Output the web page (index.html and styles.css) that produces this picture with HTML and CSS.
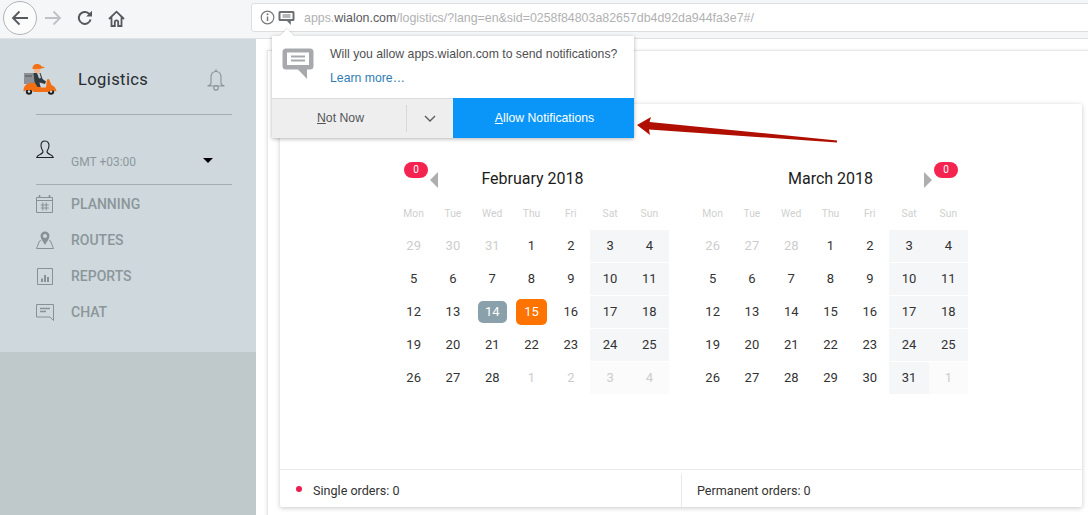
FILE: index.html
```html
<!DOCTYPE html>
<html lang="en">

<head>
    <meta charset="UTF-8">
    <title>Logistics</title>
    <link rel="stylesheet" href="styles.css">
</head>

<body>
    <div class="toolbar">
        <div class="nav-buttons">
            <div class="back-btn">
                <svg width="20" height="18" viewBox="0 0 20 18"><path d="M18 9H3M9.500 2.500 3 9l6.500 6.500" fill="none" stroke="#55585c" stroke-width="1.800"/></svg>
            </div>
            <svg class="fwd-icon" width="18" height="16" viewBox="0 0 18 16"><path d="M1 8h15M9.500 1.500 16 8l-6.500 6.500" fill="none" stroke="#bfc1c4" stroke-width="1.800"/></svg>
            <svg class="reload-icon" width="16" height="16" viewBox="0 0 16 16"><path d="M13.600 9.500A6 6 0 1 1 11.800 3.400L13.500 5" fill="none" stroke="#55585c" stroke-width="2"/><path d="M15 .8V6.600H9.200z" fill="#55585c"/></svg>
            <svg class="home-icon" width="17" height="17" viewBox="0 0 17 17"><path d="M1 9 8.500 1.700 16 9M3.500 7.500V16h3.300v-4a1.700 1.700 0 0 1 3.400 0v4h3.300V7.500" fill="none" stroke="#55585c" stroke-width="1.800"/></svg>
        </div>
        <div class="urlbar">
            <svg class="info-icon" width="15" height="15" viewBox="0 0 15 15"><circle cx="7.500" cy="7.500" r="6.300" fill="none" stroke="#77797c" stroke-width="1.200"/><path d="M7.500 6.500v4.600" stroke="#77797c" stroke-width="1.500"/><circle cx="7.500" cy="4.300" r="1" fill="#77797c"/></svg>
            <svg class="msg-icon" width="17" height="16" viewBox="0 0 17 16"><path d="M2 1h13a1.500 1.500 0 0 1 1.500 1.500v7A1.500 1.500 0 0 1 15 11h-2.200v4L9 11H2A1.500 1.500 0 0 1 .5 9.500v-7A1.500 1.500 0 0 1 2 1z" fill="#6d6f73"/><path d="M2.500 3h12v6h-12z" fill="#fff"/><path d="M4.500 5h8M4.500 7h8" stroke="#6d6f73" stroke-width="1.200"/></svg>
            <span class="url-text">apps.<b>wialon.com</b>/logistics/?lang=en&amp;sid=0258f84803a82657db4d92da944fa3e7#/</span>
        </div>
    </div>

    <div class="app">
        <div class="sidebar">
            <div class="sidebar-top">
                <div class="brand">
                    <svg class="logo" width="34" height="32" viewBox="0 0 34 32">
                        <rect x="1" y="10" width="11" height="11" fill="#8d9195"/>
                        <rect x="2" y="12" width="7" height="2" fill="#6f7377"/>
                        <circle cx="6" cy="28.500" r="3.200" fill="#222"/><circle cx="6" cy="28.500" r="1.200" fill="#ddd"/>
                        <circle cx="28" cy="28.500" r="3.200" fill="#222"/><circle cx="28" cy="28.500" r="1.200" fill="#ddd"/>
                        <path d="M.5 28C.5 23 3.500 20 8 20h7l3 4.500h5l1-8 2-.5 2.500 6c2.500 1 4.500 3 5 6.500-3-1.500-6-1.500-8 .5H11c-2-2.500-7-2.500-10.500-.5z" fill="#f36f14"/>
                        <path d="M10.500 10h7l2 6 3.500 2.500-1 2.500-5.500-1.500 1 4.500h-3l-3-5z" fill="#2f3b40"/>
                        <path d="M14 10h2.500l1.500 5-2 .5z" fill="#c7ccd0"/>
                        <circle cx="14" cy="7" r="3.200" fill="#efb48c"/>
                        <path d="M9.500 6c0-3.500 2-5 4.500-5s4 1 4.500 2.500l3.500.5c-1 1.200-3.500 1.800-6 1.800z" fill="#f36f14"/>
                    </svg>
                    <span class="brand-name">Logistics</span>
                    <svg class="bell" width="18" height="22" viewBox="0 0 18 22"><path d="M9 2.500c-3.500 0-5 2.500-5 6v5.500c0 1.500-1.500 2.500-3.500 3h17c-2-.5-3.500-1.500-3.500-3V8.500c0-3.500-1.500-6-5-6z" fill="none" stroke="#8a9499" stroke-width="1.100"/><path d="M9 .5v2" stroke="#8a9499" stroke-width="1.500"/><circle cx="9" cy="18.800" r="2.300" fill="none" stroke="#8a9499" stroke-width="1.100"/></svg>
                </div>
                <div class="user-row">
                    <svg class="user-icon" width="18" height="19" viewBox="0 0 18 19"><path d="M9 1C6.300 1 5 3 5 5.500S6.500 10.500 7 11.500c.2 1.200-1 2-3 3-2 .8-3 1.500-3.300 3h16.600c-.3-1.500-1.300-2.200-3.300-3-2-1-3.200-1.800-3-3 .5-1 2-3.500 2-6S11.700 1 9 1z" fill="none" stroke="#1d2326" stroke-width="1.100"/></svg>
                    <span class="timezone">GMT +03:00</span>
                    <span class="caret"></span>
                </div>
                <ul class="menu">
                    <li>
                        <svg width="18" height="18" viewBox="0 0 18 18"><path d="M.5 2.500h16v15H.5zM.5 5.500h16" fill="none" stroke="#879196" stroke-width="1"/><path d="M3.500 0v3M13.500 0v3" stroke="#879196" stroke-width="1.600"/><path d="M6.800 7.500v8M10.200 7.500v8M4.800 10h8M4.800 13h8" fill="none" stroke="#879196" stroke-width="1"/></svg>
                        PLANNING
                    </li>
                    <li>
                        <svg width="18" height="18" viewBox="0 0 18 18"><path d="M5 9.500 3.500 10 .5 17.500h17L14.500 10 13 9.500" fill="none" stroke="#879196" stroke-width="1"/><path d="M9 .5a4.500 4.500 0 0 0-4.500 4.500C4.500 8 7.500 11 9 14c1.500-3 4.500-6 4.500-9A4.500 4.500 0 0 0 9 .5z" fill="#879196"/><circle cx="9" cy="5" r="2" fill="#cfd8dc"/></svg>
                        ROUTES
                    </li>
                    <li>
                        <svg width="18" height="18" viewBox="0 0 18 18"><path d="M1.500 1.500h15v16h-15z" fill="none" stroke="#879196" stroke-width="1"/><path d="M5 11.500h2V15H5zM8 8h2v7H8zM11 10h2v5h-2z" fill="#879196"/></svg>
                        REPORTS
                    </li>
                    <li>
                        <svg width="18" height="18" viewBox="0 0 18 18"><path d="M.5 1.500h17v16l-3.500-3.500H.5z" fill="none" stroke="#879196" stroke-width="1"/><path d="M4 5.500h10M4 8.500h6" stroke="#879196" stroke-width="1.500"/></svg>
                        CHAT
                    </li>
                </ul>
            </div>
        </div>

        <div class="content">
            <div class="panel">
                <div class="card">
                    <div class="calendars">
                        <div class="month">
                            <div class="month-head">
                                <span class="badge badge-left">0</span>
                                <span class="prev-arrow"></span>
                                <span class="month-title month-title-first">February 2018</span>
                            </div>
                            <div class="week-names">
                                <span>Mon</span><span>Tue</span><span>Wed</span><span>Thu</span><span>Fri</span><span>Sat</span><span>Sun</span>
                            </div>
                            <div class="days">
                                <span class="out">29</span><span class="out">30</span><span class="out">31</span><span>1</span><span>2</span><span class="we">3</span><span class="we">4</span>
                                <span>5</span><span>6</span><span>7</span><span>8</span><span>9</span><span class="we">10</span><span class="we">11</span>
                                <span>12</span><span>13</span><span><i class="picked">14</i></span><span><i class="today">15</i></span><span>16</span><span class="we">17</span><span class="we">18</span>
                                <span>19</span><span>20</span><span>21</span><span>22</span><span>23</span><span class="we">24</span><span class="we">25</span>
                                <span>26</span><span>27</span><span>28</span><span class="out">1</span><span class="out">2</span><span class="out we-out">3</span><span class="out we-out">4</span>
                            </div>
                        </div>
                        <div class="month">
                            <div class="month-head">
                                <span class="month-title">March 2018</span>
                                <span class="next-arrow"></span>
                                <span class="badge badge-right">0</span>
                            </div>
                            <div class="week-names">
                                <span>Mon</span><span>Tue</span><span>Wed</span><span>Thu</span><span>Fri</span><span>Sat</span><span>Sun</span>
                            </div>
                            <div class="days">
                                <span class="out">26</span><span class="out">27</span><span class="out">28</span><span>1</span><span>2</span><span class="we">3</span><span class="we">4</span>
                                <span>5</span><span>6</span><span>7</span><span>8</span><span>9</span><span class="we">10</span><span class="we">11</span>
                                <span>12</span><span>13</span><span>14</span><span>15</span><span>16</span><span class="we">17</span><span class="we">18</span>
                                <span>19</span><span>20</span><span>21</span><span>22</span><span>23</span><span class="we">24</span><span class="we">25</span>
                                <span>26</span><span>27</span><span>28</span><span>29</span><span>30</span><span class="we">31</span><span class="out we-out">1</span>
                            </div>
                        </div>
                    </div>
                    <div class="card-footer">
                        <div class="orders orders-single"><span class="dot"></span>Single orders: 0</div>
                        <div class="orders orders-perm">Permanent orders: 0</div>
                    </div>
                </div>
            </div>
        </div>
    </div>

    <div class="popup">
        <div class="popup-body">
            <svg class="popup-icon" width="32" height="32" viewBox="0 0 32 32"><path d="M4 .5h24a3.500 3.500 0 0 1 3.500 3.500v14a3.500 3.500 0 0 1-3.500 3.500h-3V31l-9-9.500H4A3.500 3.500 0 0 1 .5 18V4A3.500 3.500 0 0 1 4 .5z" fill="#a8a9ad"/><path d="M5 4.500h22v12.500H5z" fill="#fff"/><path d="M9 8.500h14M9 12.500h14" stroke="#a8a9ad" stroke-width="2"/></svg>
            <div class="popup-text">
                <p>Will you allow apps.wialon.com to send notifications?</p>
                <a href="#">Learn more…</a>
            </div>
        </div>
        <div class="popup-actions">
            <div class="btn-notnow"><u>N</u>ot Now</div>
            <div class="btn-more"><svg width="12" height="7" viewBox="0 0 12 7"><path d="M1 1l5 5 5-5" fill="none" stroke="#55585c" stroke-width="1.300"/></svg></div>
            <div class="btn-allow"><u>A</u>llow Notifications</div>
        </div>
    </div>

    <svg class="red-arrow" width="204" height="30" viewBox="0 0 204 30"><path d="M1 9 15 1 13.500 6 201 24.500 201 26.500 13 13.500 14 19z" fill="#b00f00"/></svg>
</body>

</html>
```
FILE: styles.css
```css
* {
    box-sizing: border-box;
}

body {
    margin: 0;
    height: 515px;
    overflow: hidden;
    font-family: Roboto, sans-serif;
    background: #fff;
    position: relative;
}

/* browser bar */
.toolbar {
    height: 39px;
    display: flex;
    align-items: flex-start;
    background: #f5f6f7;
    border-bottom: 1px solid #dfe1e3;
}

.nav-buttons {
    width: 251px;
    display: flex;
    align-items: center;
    height: 36px;
    padding-left: 3px;
}

.back-btn {
    width: 34px;
    height: 34px;
    border: 1px solid #b1b3b6;
    border-radius: 50%;
    background: #fbfbfb;
    display: flex;
    align-items: center;
    justify-content: center;
}

.fwd-icon {
    margin-left: 7px;
}

.reload-icon {
    margin-left: 15px;
}

.home-icon {
    margin-left: 15px;
}

.urlbar {
    flex: 1;
    height: 29px;
    margin-top: 3px;
    margin-right: -6px;
    background: #fff;
    border: 1px solid #dcdee0;
    border-radius: 3px 0 0 3px;
    display: flex;
    align-items: center;
    padding-left: 8px;
    font-family: "Liberation Sans", Arial, sans-serif;
    font-size: 12.400px;
}

.msg-icon {
    margin-left: 3px;
}

.url-text {
    margin-left: 9px;
    color: #b1b1b3;
    white-space: nowrap;
}

.url-text b {
    font-weight: normal;
    color: #5a5a5e;
}

/* page */
.app {
    display: flex;
    height: 476px;
}

.sidebar {
    width: 256px;
    background: #bfc9cc;
}

.sidebar-top {
    height: 313px;
    background: #cfd8dc;
    padding-left: 36px;
    padding-right: 24px;
}

.brand {
    height: 76px;
    margin-left: -13px;
    padding-top: 24px;
    display: flex;
    align-items: flex-start;
    position: relative;
}

.brand::after {
    content: "";
    position: absolute;
    left: 13px;
    right: 0;
    bottom: 0;
    border-bottom: 1px solid #a5aeb2;
}

.logo {
    display: block;
}

.brand-name {
    margin-left: 21px;
    margin-top: 7px;
    font-size: 16.500px;
    letter-spacing: 0.400px;
    color: #262c30;
}

.bell {
    margin-left: auto;
    margin-right: 7px;
    margin-top: 6px;
}

.user-row {
    height: 70px;
    border-bottom: 1px solid #a5aeb2;
    display: flex;
    align-items: flex-start;
    position: relative;
    padding-top: 25px;
}

.timezone {
    margin-left: 17px;
    margin-top: 15px;
    font-size: 12px;
    color: #8d989d;
}

.caret {
    margin-left: auto;
    margin-right: 19px;
    margin-top: 18px;
    border-left: 5px solid transparent;
    border-right: 5px solid transparent;
    border-top: 5px solid #000;
}

.menu {
    list-style-type: none;
    padding: 1px 0 0;
    margin: 0;
}

.menu li {
    height: 36px;
    display: flex;
    align-items: center;
    gap: 17px;
    font-size: 14px;
    font-weight: 500;
    color: #8b969b;
}

.content {
    flex: 1;
    padding: 11px 0 0 11px;
}

.panel {
    height: 470px;
    margin-right: -10px;
    padding: 53px 16px 0 12px;
    border-top: 1px solid #e6e7e9;
    border-left: 1px solid #e6e7e9;
    box-shadow: -1px 0 3px rgba(0, 0, 0, 0.08);
}

/* calendar card */
.card {
    height: 403px;
    background: #fff;
    border-radius: 2px;
    box-shadow: 0 1px 5px rgba(0, 0, 0, 0.22);
    display: flex;
    flex-direction: column;
}

.calendars {
    flex: 1;
    display: flex;
    justify-content: center;
    gap: 24px;
    padding-top: 58px;
}

.month {
    width: 275px;
}

.month-head {
    height: 34px;
    position: relative;
    text-align: center;
}

.month-title {
    font-size: 16px;
    line-height: 34px;
    color: #1c1c1c;
}

.month-title-first {
    margin-left: 2px;
}

.badge {
    position: absolute;
    top: 0;
    width: 24px;
    height: 16px;
    border-radius: 8px;
    background: #f5234f;
    color: #fff;
    font-size: 10px;
    line-height: 16px;
    text-align: center;
}

.badge-left {
    left: 10px;
}

.badge-right {
    right: 10px;
}

.prev-arrow,
.next-arrow {
    position: absolute;
    top: 10px;
    border-top: 8px solid transparent;
    border-bottom: 8px solid transparent;
}

.prev-arrow {
    left: 36px;
    border-right: 8px solid #aeaeae;
}

.next-arrow {
    right: 36px;
    border-left: 8px solid #aeaeae;
}

.week-names {
    height: 34px;
    display: grid;
    grid-template-columns: repeat(7, 1fr);
    align-items: center;
    text-align: center;
    font-size: 10.300px;
    color: #cfcfcf;
}

.days {
    display: grid;
    grid-template-columns: repeat(7, 1fr);
    grid-auto-rows: 32px;
    row-gap: 1px;
    font-size: 13px;
    color: #333;
}

.days span {
    display: flex;
    align-items: center;
    justify-content: center;
    padding-bottom: 2px;
}

.days .we {
    background: #f5f6f8;
}

.days .out {
    color: #cdcdcd;
}

.days .we-out {
    background: #fbfbfb;
}

.days i {
    font-style: normal;
    display: flex;
    align-items: center;
    justify-content: center;
    margin-top: 2px;
    padding-bottom: 2px;
    color: #fff;
    border-radius: 5px;
}

.picked {
    width: 29px;
    height: 22px;
    background: #8aa0ab;
}

.today {
    width: 31px;
    height: 26px;
    background: #ff7300;
}

.card-footer {
    height: 38px;
    padding-top: 4px;
    border-top: 1px solid #e9eaec;
    display: flex;
    font-size: 12.600px;
    color: #333;
}

.orders {
    flex: 1;
    display: flex;
    align-items: center;
}

.orders-single {
    padding-left: 16px;
}

.orders-perm {
    padding-left: 15px;
    border-left: 1px solid #e9eaec;
}

.dot {
    width: 6px;
    height: 6px;
    margin-right: 11px;
    margin-top: -3px;
    border-radius: 50%;
    background: #ee1c4e;
}

/* notification doorhanger */
.popup {
    position: absolute;
    left: 272px;
    top: 36px;
    width: 362px;
    height: 102px;
    background: #fff;
    box-shadow: 0 1px 4px rgba(0, 0, 0, 0.3);
    font-family: "Liberation Sans", Arial, sans-serif;
    font-size: 12.250px;
}

.popup::before {
    content: "";
    position: absolute;
    left: 10px;
    top: -5px;
    width: 10px;
    height: 10px;
    background: #fff;
    transform: rotate(45deg);
    box-shadow: -1px -1px 1px rgba(0, 0, 0, 0.08);
}

.popup-body {
    height: 62px;
    display: flex;
    position: relative;
    padding: 11px 0 0 10px;
}

.popup-icon {
    margin-top: 1px;
}

.popup-text {
    margin-left: 16px;
}

.popup-text p {
    margin: 0 0 10px;
    line-height: 14px;
    color: #4f4f52;
}

.popup-text a {
    color: #2f7cb5;
    text-decoration: none;
    line-height: 14px;
}

.popup-actions {
    height: 40px;
    display: flex;
    align-items: stretch;
    background: #eeeeee;
    border-top: 1px solid #dcdcdc;
    color: #555558;
    position: relative;
}

.btn-notnow {
    width: 134px;
    padding-left: 3px;
    padding-bottom: 1px;
    display: flex;
    align-items: center;
    justify-content: center;
}

.btn-more {
    width: 47px;
    display: flex;
    align-items: center;
    justify-content: center;
    position: relative;
}

.btn-more::before {
    content: "";
    position: absolute;
    left: 0;
    top: 6px;
    bottom: 6px;
    border-left: 1px solid #d8d8d8;
}

.btn-allow {
    flex: 1;
    margin-top: -1px;
    padding-left: 2px;
    display: flex;
    align-items: center;
    justify-content: center;
    background: #0996f8;
    color: #fff;
}

.red-arrow {
    position: absolute;
    left: 636px;
    top: 116px;
}
```
